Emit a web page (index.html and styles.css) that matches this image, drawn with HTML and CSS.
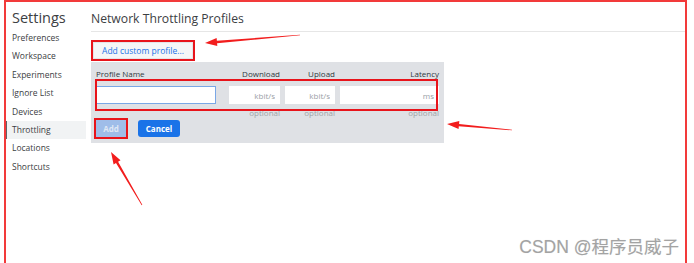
FILE: index.html
```html
<!DOCTYPE html>
<html>
<head>
    <title>Network Throttling Profiles</title>
    <link rel="stylesheet" href="styles.css">
</head>
<body>
    <div class="frame">
        <div class="sidebar">
            <div class="sidebar-title">Settings</div>
            <div class="nav-item">Preferences</div>
            <div class="nav-item">Workspace</div>
            <div class="nav-item">Experiments</div>
            <div class="nav-item">Ignore List</div>
            <div class="nav-item">Devices</div>
            <div class="nav-item selected">Throttling</div>
            <div class="nav-item">Locations</div>
            <div class="nav-item">Shortcuts</div>
        </div>

        <div class="main">
            <div class="main-title">Network Throttling Profiles</div>
            <div class="toolbar">
                <button class="add-profile marked">Add custom profile...</button>
            </div>

            <div class="editor">
                <div class="editor-grid">
                    <div class="col-head">Profile Name</div>
                    <div class="col-head right">Download</div>
                    <div class="col-head right">Upload</div>
                    <div class="col-head right">Latency</div>

                    <input class="field name-field" type="text">
                    <input class="field" type="text" placeholder="kbit/s">
                    <input class="field" type="text" placeholder="kbit/s">
                    <input class="field" type="text" placeholder="ms">

                    <div class="hint"></div>
                    <div class="hint">optional</div>
                    <div class="hint">optional</div>
                    <div class="hint">optional</div>
                </div>
                <div class="editor-buttons">
                    <button class="btn btn-add marked">Add</button>
                    <button class="btn btn-cancel">Cancel</button>
                </div>
            </div>
        </div>
    </div>

    <div class="row-mark"></div>

    <svg class="arrows" width="694" height="263" viewBox="0 0 694 263">
        <polygon points="205,43 216.6,38 216.9,40.8 300,34.7 300,35.3 217.1,43.2 217.3,46"/>
        <polygon points="447,124 459.3,121.1 459.1,123.9 512,129.7 512,130.3 458.8,126.3 458.6,129.1"/>
        <polygon points="111,152 120.5,160.3 118.1,161.75 142.3,204.85 141.7,205.15 116,163 113.6,164.4"/>
    </svg>

    <div class="watermark">CSDN @程序员威子</div>
</body>
</html>
```

FILE: styles.css
```css
body {
    margin: 0;
    padding: 0;
    width: 694px;
    height: 263px;
    overflow: hidden;
    background: #ffffff;
    font-family: "Open Sans", "Noto Sans", sans-serif;
    color: #303942;
    position: relative;
}

.frame {
    margin-left: 4px;
    width: 679px;
    height: 261px;
    border: 2px solid #f23a3a;
    border-bottom: none;
    display: flex;
}

.sidebar {
    width: 80px;
    flex-shrink: 0;
}

.sidebar-title {
    font-size: 14.5px;
    padding: 6px 0 0 6px;
    height: 21px;
    color: #3c4043;
}

.nav-item {
    font-size: 8.5px;
    height: 18.4px;
    line-height: 18.4px;
    padding-left: 6px;
    color: #3c4043;
}

.nav-item.selected {
    background: #f1f3f4;
    box-shadow: inset 1px 0 0 #5f6368;
}

.main {
    flex: 1;
    padding-left: 5px;
}

.main-title {
    font-size: 12.2px;
    padding-top: 8px;
    height: 21px;
    border-bottom: 1px solid #e6e6e6;
    color: #3c4043;
}

.toolbar {
    padding: 5px 0 0 2px;
    height: 25px;
}

.add-profile {
    font-family: inherit;
    font-size: 8.5px;
    color: #1a73e8;
    background: #f5f6f7;
    border: 1px solid #e3e5e8;
    border-radius: 0;
    width: 100px;
    height: 17px;
    padding: 0;
    margin: 0;
}

.marked {
    outline: 2px solid #e8141b;
    outline-offset: 0;
}

.editor {
    width: 353px;
    height: 81px;
    background: #dfe1e5;
    padding: 5px 5px 0 5px;
    box-sizing: border-box;
}

.editor-grid {
    display: grid;
    grid-template-columns: 128px 51px 50px 99px;
    column-gap: 5px;
}

.col-head {
    font-size: 8px;
    height: 13px;
    line-height: 13px;
    color: #303942;
}

.right {
    text-align: right;
}

.field {
    font-family: inherit;
    font-size: 8px;
    height: 18px;
    box-sizing: border-box;
    border: 1px solid #ffffff;
    background: #ffffff;
    margin: 6px 0 0 0;
    padding: 0 4px;
    text-align: right;
    width: 100%;
    outline: none;
}

.field::placeholder {
    color: #9aa0a6;
}

.name-field {
    width: 120px;
    border-color: #7aa7e6;
    text-align: left;
}

.hint {
    font-size: 8px;
    text-align: right;
    color: #a0a4a8;
    height: 15px;
    line-height: 15px;
    padding-top: 1px;
}

.editor-buttons {
    display: flex;
    gap: 12px;
    padding-top: 0;
}

.btn {
    font-family: inherit;
    font-size: 8px;
    font-weight: 700;
    height: 17px;
    border: none;
    border-radius: 3px;
    padding: 0;
    color: #ffffff;
}

.btn-add {
    width: 30px;
    background: #9fbde9;
    color: #dfe7f4;
    border-radius: 0;
}

.btn-cancel {
    width: 42px;
    background: #1a73e8;
}

.row-mark {
    position: absolute;
    left: 95px;
    top: 79px;
    width: 339px;
    height: 28px;
    border: 2px solid #e8141b;
}

.arrows {
    position: absolute;
    left: 0;
    top: 0;
    pointer-events: none;
}

.arrows polygon {
    fill: #f21d1d;
}

.watermark {
    position: absolute;
    right: 15px;
    top: 233px;
    font-family: "Liberation Sans", "Noto Sans CJK SC", sans-serif;
    font-size: 17.5px;
    color: #a3a3a3;
    text-shadow: 0 0 1px #e0e0e0;
}
```
